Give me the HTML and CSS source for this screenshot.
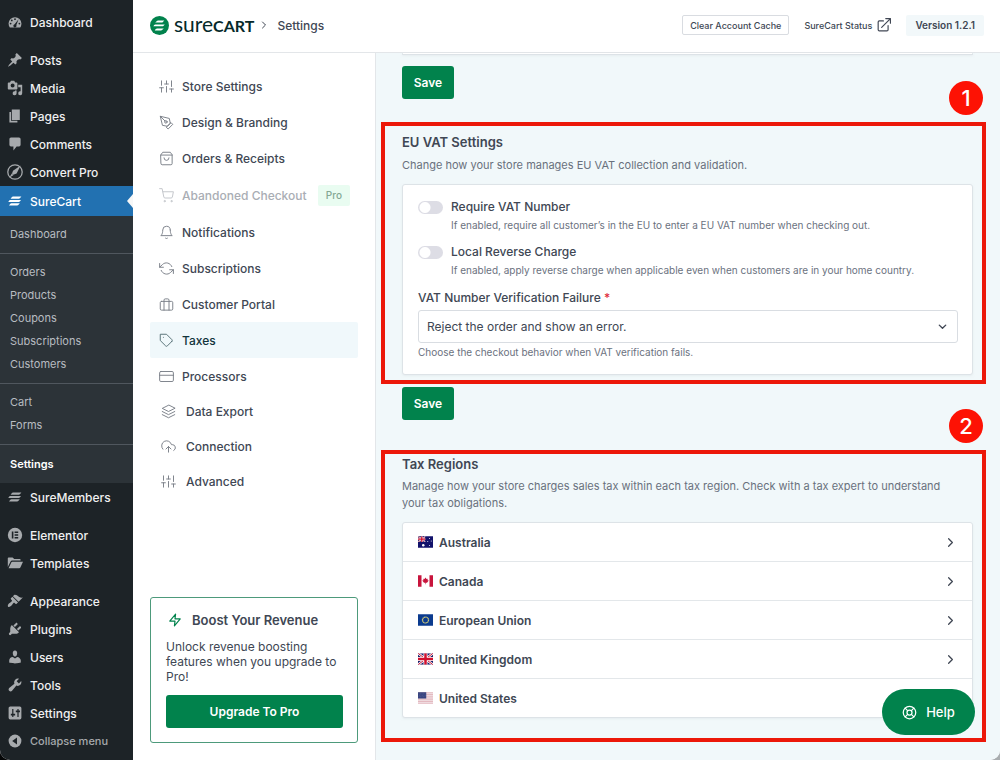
FILE: index.html
```html
<!DOCTYPE html>
<html lang="en">
<head>
<meta charset="utf-8">
<meta name="viewport" content="width=device-width, initial-scale=1">
<title>SureCart Settings</title>
<link rel="stylesheet" href="styles.css">
</head>
<body>
<svg class="sprite" aria-hidden="true">
  <symbol id="bars" viewBox="0 0 20 20"><path d="M7.500 4.500H18l-1.600 1.900c-.6.600-1 .8-1.800.8H4.500l1.400-1.900c.5-.6.900-.8 1.600-.8zM3.500 8.700h14l-1.200 1.700c-.5.700-.9 1-1.800 1H1.500l1.200-1.700c.3-.7.500-1 .8-1zM5.500 12.900H16l-1.600 1.900c-.6.600-1 .8-1.800.8H2.500l1.400-1.900c.5-.6.900-.8 1.600-.8z"/></symbol>
  <symbol id="sliders" viewBox="0 0 24 24"><path d="M4 21v-7M4 10V3M12 21v-9M12 8V3M20 21v-5M20 12V3M1 14h6M9 8h6M17 16h6"/></symbol>
  <symbol id="chevron" viewBox="0 0 24 24"><path d="M9 18l6-6-6-6"/></symbol>
  <symbol id="union" viewBox="0 0 30 24" preserveAspectRatio="none"><path fill="#1b1f6b" d="M0 0h30v24H0z"/><path stroke="#fff" stroke-width="5" d="M0 0l30 24M30 0L0 24"/><path stroke="#c8102e" stroke-width="2" d="M0 0l30 24M30 0L0 24"/><path stroke="#fff" stroke-width="8" d="M15 0v24M0 12h30"/><path stroke="#d0102e" stroke-width="5" d="M15 0v24M0 12h30"/></symbol>
</svg>
<div class="app">
  <aside class="admin">
    <nav aria-label="Admin menu">
      <ul class="menu">
        <li><a href="#"><svg class="dash" viewBox="0 0 20 20"><path d="M3.500 17h13c1-1.400 1.500-3 1.500-5a8 8 0 0 0-16 0c0 2 .5 3.600 1.500 5z"/><g fill="#1d2327"><circle cx="10" cy="6.500" r="1.100"/><circle cx="6" cy="8" r="1.100"/><circle cx="4.500" cy="12" r="1.100"/><circle cx="15.500" cy="12" r="1.100"/><path d="M14.500 6.500l-2.800 7.200a2 2 0 1 1-2.200-1z"/></g></svg>Dashboard</a></li>
      </ul>
      <ul class="menu">
        <li><a href="#"><svg class="dash" viewBox="0 0 20 20"><path d="M10.440 3.020l1.820-1.820 6.360 6.350-1.830 1.820c-1.050-.68-2.480-.57-3.410.36l-.75.75c-.92.93-1.040 2.350-.35 3.410l-1.830 1.820-2.410-2.410-2.800 2.790c-.42.42-3.380 2.710-3.800 2.290s1.860-3.390 2.280-3.810l2.790-2.790L4.100 9.360l1.830-1.820c1.050.69 2.480.57 3.400-.36l.75-.75c.93-.92 1.050-2.350.36-3.410z"/></svg>Posts</a></li>
        <li><a href="#"><svg class="dash" viewBox="0 0 20 20"><path fill-rule="evenodd" d="M13 11V4c0-.55-.45-1-1-1h-1.670L9 1H5L3.670 3H2c-.55 0-1 .45-1 1v7c0 .55.45 1 1 1h10c.55 0 1-.45 1-1zM7 4.500a2.500 2.500 0 1 1 0 5 2.500 2.500 0 0 1 0-5zM14 6h5v10.500a2.500 2.500 0 1 1-2-2.450V9h-3zM10 14.050V13h2v3.500a2.500 2.500 0 1 1-2-2.450z"/></svg>Media</a></li>
        <li><a href="#"><svg class="dash" viewBox="0 0 20 20"><path d="M6 15V2h10v13zm-1 1h8v2H3V5h2z"/></svg>Pages</a></li>
        <li><a href="#"><svg class="dash" viewBox="0 0 20 20"><path d="M5 2h10c1.100 0 2 .9 2 2v7c0 1.100-.9 2-2 2h-3l-4 5v-5H5c-1.100 0-2-.9-2-2V4c0-1.100.9-2 2-2z"/></svg>Comments</a></li>
        <li><a href="#"><svg class="dash" viewBox="0 0 20 20"><circle cx="10" cy="10" r="9" fill="none" stroke="#a7aaad" stroke-width="1.600"/><path d="M17 2L7.500 8.500l-1.200 3.300 1.500 1.500L12 12zM6 12l-3 5 5-3z"/></svg>Convert Pro</a></li>
        <li><a class="current" href="#"><svg class="dash"><use href="#bars"/></svg>SureCart</a></li>
      </ul>
      <div class="submenu">
        <ul><li><a href="#">Dashboard</a></li></ul>
        <ul><li><a href="#">Orders</a></li><li><a href="#">Products</a></li><li><a href="#">Coupons</a></li><li><a href="#">Subscriptions</a></li><li><a href="#">Customers</a></li></ul>
        <ul><li><a href="#">Cart</a></li><li><a href="#">Forms</a></li></ul>
        <ul><li><a class="chosen" href="#">Settings</a></li></ul>
      </div>
      <ul class="menu">
        <li><a href="#"><svg class="dash"><use href="#bars"/></svg>SureMembers</a></li>
      </ul>
      <ul class="menu">
        <li><a href="#"><svg class="dash" viewBox="0 0 20 20"><circle cx="10" cy="10" r="9"/><path fill="#1d2327" d="M6 5.500h2v9H6zM9.500 5.500H14v2H9.500zM9.500 9H14v2H9.500zM9.500 12.500H14v2H9.500z"/></svg>Elementor</a></li>
        <li><a href="#"><svg class="dash" viewBox="0 0 20 20"><path d="M1 15V4c0-.6.400-1 1-1h5l2 2h7c.6 0 1 .4 1 1v1H6.500c-1 0-1.600.4-2 1.200zM2 16.500l3.500-7.300c.3-.5.600-.7 1.200-.7H20l-3.300 7c-.4.700-.8 1-1.500 1z"/></svg>Templates</a></li>
      </ul>
      <ul class="menu">
        <li><a href="#"><svg class="dash" viewBox="0 0 20 20"><path d="M14.480 11.060L7.410 3.990l1.500-1.500c.5-.56 2.300-.47 3.510.32 1.210.8 1.430 1.280 2.910 2.100 1.180.64 2.450 1.260 4.450.85zm-.71.71L6.700 4.700 4.930 6.470c-.39.39-.39 1.020 0 1.410l1.060 1.060c.39.39.39 1.030 0 1.420-.6.6-1.430 1.110-2.210 1.690-.35.26-.7.53-1.010.84C1.430 14.230.400 16.080 1.400 17.070c.99 1 2.840-.03 4.180-1.360.31-.31.58-.66.85-1.020.57-.78 1.080-1.610 1.690-2.210.39-.39 1.020-.39 1.410 0l1.060 1.060c.39.39 1.020.39 1.410 0z"/></svg>Appearance</a></li>
        <li><a href="#"><svg class="dash" viewBox="0 0 20 20"><path d="M13.110 4.360L9.870 7.600 8 5.730l3.240-3.240c.35-.34 1.050-.2 1.560.32.52.51.66 1.210.31 1.550zm-8 1.770l.91-1.120 9.010 9.010-1.190.84c-.71.71-2.630 1.160-3.820 1.160H6.140L4.900 17.260c-.59.59-1.540.59-2.120 0-.59-.58-.59-1.530 0-2.120l1.240-1.240v-3.880c0-1.130.4-3.190 1.090-3.890zm7.260 3.970l3.240-3.240c.34-.35 1.040-.21 1.550.31.52.51.66 1.210.31 1.550l-3.240 3.250z"/></svg>Plugins</a></li>
        <li><a href="#"><svg class="dash" viewBox="0 0 20 20"><path d="M10 9.250c-2.270 0-2.730-3.440-2.730-3.440C7 4.020 7.820 2 9.970 2c2.160 0 2.980 2.020 2.710 3.810 0 0-.41 3.440-2.680 3.440zm0 2.570L12.720 10c2.390 0 4.520 2.330 4.520 4.530v2.490s-3.650 1.130-7.240 1.130c-3.650 0-7.240-1.130-7.240-1.130v-2.490c0-2.250 1.940-4.480 4.470-4.480z"/></svg>Users</a></li>
        <li><a href="#"><svg class="dash" viewBox="0 0 20 20"><path d="M16.680 9.770c-1.340 1.340-3.300 1.670-4.950.99l-5.410 6.520c-.99.99-2.590.99-3.580 0s-.99-2.590 0-3.570l6.520-5.420c-.68-1.650-.35-3.610.99-4.950 1.280-1.280 3.120-1.620 4.720-1.060l-2.890 2.890 2.820 2.820 2.860-2.870c.53 1.580.18 3.390-1.080 4.650z"/></svg>Tools</a></li>
        <li><a href="#"><svg class="dash" viewBox="0 0 20 20"><path fill-rule="evenodd" d="M18 16V4c0-1.100-.9-2-2-2H4c-1.100 0-2 .9-2 2v12c0 1.100.9 2 2 2h12c1.100 0 2-.9 2-2zM8 11h2.200v2H8v2H6.500v-2H4.800v-2h1.700V5H8zm5-2h-2V7h2V5h1.500v2h1.700v2h-1.700v6H13z"/></svg>Settings</a></li>
        <li><button class="collapse" type="button"><svg class="dash" viewBox="0 0 20 20"><circle cx="10" cy="10" r="8"/><path fill="#1d2327" d="M12.500 5.500v9L6.500 10z"/></svg>Collapse menu</button></li>
      </ul>
    </nav>
  </aside>

  <div class="page">
    <header class="topbar">
      <a class="brand" href="#"><svg class="brand-mark" viewBox="0 0 20 20"><circle cx="10" cy="10" r="10" fill="#01824c"/><path fill="#fff" d="M8.500 4.800H15l-1.400 1.500c-.4.400-.8.600-1.400.6H5.500l1.500-1.500c.4-.4.900-.6 1.500-.6zM5.500 9h10l-1.200 1.300c-.4.400-.8.600-1.400.6H3.500l.9-1.300c.3-.4.600-.6 1.100-.6zM7.500 13.100h7L13 14.600c-.4.400-.9.600-1.500.6H5l1-1.400c.4-.5.800-.7 1.500-.7z"/></svg><span class="brand-name"><span class="brand-light">sure</span><b>CART</b></span></a>
      <svg class="line crumb"><use href="#chevron"/></svg>
      <span class="here">Settings</span>
      <div class="tools">
        <button class="cache" type="button">Clear Account Cache</button>
        <a class="status" href="#">SureCart Status <svg class="line ext" viewBox="0 0 24 24"><path d="M19 13v7a2 2 0 0 1-2 2H4a2 2 0 0 1-2-2V7a2 2 0 0 1 2-2h7M15 1h8v8M8 16L23 1"/></svg></a>
        <span class="version">Version 1.2.1</span>
      </div>
    </header>

    <div class="columns">
      <div class="side">
        <nav aria-label="Settings sections">
          <ul class="tabs">
            <li><a href="#"><svg class="line"><use href="#sliders"/></svg>Store Settings</a></li>
            <li><a href="#"><svg class="line" viewBox="0 0 24 24"><path d="M12 19l7-7 3 3-7 7zM18 13l-1.500-7.500L2 2l3.500 14.500L13 18zM2 2l7.600 7.600"/><circle cx="11" cy="11" r="2"/></svg>Design &amp; Branding</a></li>
            <li><a href="#"><svg class="line" viewBox="0 0 24 24"><path d="M3 6l3-4h12l3 4v14a2 2 0 0 1-2 2H5a2 2 0 0 1-2-2zM3 6.500h18M8 11a4 4 0 0 0 8 0"/></svg>Orders &amp; Receipts</a></li>
            <li class="locked"><a href="#"><svg class="line" viewBox="0 0 24 24"><circle cx="9" cy="21" r="1"/><circle cx="20" cy="21" r="1"/><path d="M1 1h4l2.700 13.400a2 2 0 0 0 2 1.600h9.700a2 2 0 0 0 2-1.600L23 6H6"/></svg>Abandoned Checkout<span class="pro">Pro</span></a></li>
            <li><a href="#"><svg class="line" viewBox="0 0 24 24"><path d="M18 8A6 6 0 0 0 6 8c0 7-3 9-3 9h18s-3-2-3-9M13.700 21a2 2 0 0 1-3.400 0"/></svg>Notifications</a></li>
            <li><a href="#"><svg class="line" viewBox="0 0 24 24"><path d="M1 4v6h6M23 20v-6h-6"/><path d="M20.500 9A9 9 0 0 0 5.600 5.600L1 10m22 4l-4.600 4.400A9 9 0 0 1 3.500 15"/></svg>Subscriptions</a></li>
            <li><a href="#"><svg class="line" viewBox="0 0 24 24"><rect x="2" y="7" width="20" height="14" rx="2"/><path d="M16 21V5a2 2 0 0 0-2-2h-4a2 2 0 0 0-2 2v16"/></svg>Customer Portal</a></li>
            <li><a class="active" href="#" aria-current="page"><svg class="line" viewBox="0 0 24 24"><path d="M20.600 13.400l-7.200 7.200a2 2 0 0 1-2.800 0L2 12V2h10l8.600 8.600a2 2 0 0 1 0 2.800zM7 7h.01"/></svg>Taxes</a></li>
            <li><a href="#"><svg class="line" viewBox="0 0 24 24"><rect x="1" y="4" width="22" height="16" rx="2"/><path d="M1 10h22"/></svg>Processors</a></li>
          </ul>
          <ul class="tabs extra">
            <li><a href="#"><svg class="line" viewBox="0 0 24 24"><path d="M12 2L2 7l10 5 10-5zM2 17l10 5 10-5M2 12l10 5 10-5"/></svg>Data Export</a></li>
            <li><a href="#"><svg class="line" viewBox="0 0 24 24"><path d="M16 16l-4-4-4 4M12 12v9M20.400 18.400A5 5 0 0 0 18 9h-1.300A8 8 0 1 0 3 16.300"/></svg>Connection</a></li>
            <li><a href="#"><svg class="line"><use href="#sliders"/></svg>Advanced</a></li>
          </ul>
        </nav>
        <section class="boost">
          <h2><svg class="line" viewBox="0 0 24 24"><path d="M13 2L3 14h9l-1 8 10-12h-9z"/></svg>Boost Your Revenue</h2>
          <p>Unlock revenue boosting features when you upgrade to Pro!</p>
          <button class="primary" type="button">Upgrade To Pro</button>
        </section>
      </div>

      <main class="content">
        <div class="card tail"></div>
        <button class="primary save" type="button">Save</button>

        <section class="marked">
          <span class="pin">1</span>
          <h2>EU VAT Settings</h2>
          <p class="intro">Change how your store manages EU VAT collection and validation.</p>
          <div class="card form">
            <div class="switch">
              <input type="checkbox" id="require" aria-describedby="require-help">
              <label for="require">Require VAT Number</label>
              <p class="help" id="require-help">If enabled, require all customer’s in the EU to enter a EU VAT number when checking out.</p>
            </div>
            <div class="switch">
              <input type="checkbox" id="reverse" aria-describedby="reverse-help">
              <label for="reverse">Local Reverse Charge</label>
              <p class="help" id="reverse-help">If enabled, apply reverse charge when applicable even when customers are in your home country.</p>
            </div>
            <div class="field">
              <label for="failure">VAT Number Verification Failure <span class="required">*</span></label>
              <div class="select">
                <select id="failure"><option>Reject the order and show an error.</option></select>
                <svg class="line" viewBox="0 0 24 24"><path d="M5 9l7 7 7-7"/></svg>
              </div>
              <p class="help">Choose the checkout behavior when VAT verification fails.</p>
            </div>
          </div>
        </section>
        <button class="primary save second" type="button">Save</button>

        <section class="marked regions">
          <span class="pin">2</span>
          <h2>Tax Regions</h2>
          <p class="intro">Manage how your store charges sales tax within each tax region. Check with a tax expert to understand your tax obligations.</p>
          <ul class="card list">
            <li><a href="#"><svg class="flag" viewBox="0 0 60 46"><path fill="#12126b" d="M0 0h60v46H0z"/><use href="#union" width="30" height="23"/><g fill="#fff"><circle cx="21" cy="36" r="5"/><circle cx="46" cy="9" r="2"/><circle cx="53" cy="19" r="2"/><circle cx="39" cy="21" r="2"/><circle cx="46" cy="37" r="2"/></g></svg>Australia<svg class="line go"><use href="#chevron"/></svg></a></li>
            <li><a href="#"><svg class="flag" viewBox="0 0 60 46"><path fill="#fff" d="M0 0h60v46H0z"/><path fill="#c8143c" d="M0 0h14v46H0zM46 0h14v46H46zM30 9l4 6 5-1-1 6 5 1-7 9h-5v6h-2v-6h-5l-7-9 5-1-1-6 5 1z"/></svg>Canada<svg class="line go"><use href="#chevron"/></svg></a></li>
            <li><a href="#"><svg class="flag" viewBox="0 0 60 46"><path fill="#0b3b8f" d="M0 0h60v46H0z"/><circle cx="30" cy="23" r="12" fill="none" stroke="#c8c47a" stroke-width="5" stroke-dasharray="5 1"/></svg>European Union<svg class="line go"><use href="#chevron"/></svg></a></li>
            <li><a href="#"><svg class="flag" viewBox="0 0 60 46"><use href="#union" width="60" height="46"/></svg>United Kingdom<svg class="line go"><use href="#chevron"/></svg></a></li>
            <li><a href="#"><svg class="flag" viewBox="0 0 60 46"><path fill="#f3e6e9" d="M0 0h60v46H0z"/><path stroke="#dda9b2" stroke-width="3" d="M0 2h60M0 9h60M0 16h60M0 23h60M0 30h60M0 37h60M0 44h60"/><path fill="#36427e" d="M0 0h33v25H0z"/><path stroke="#8a92b8" stroke-width="2" stroke-dasharray="2 4" d="M3 6h28M5 12h26M3 18h28"/></svg>United States<svg class="line go"><use href="#chevron"/></svg></a></li>
          </ul>
        </section>
      </main>
    </div>
  </div>
</div>
<button class="helper" type="button"><svg class="line" viewBox="0 0 24 24"><circle cx="12" cy="12" r="10"/><circle cx="12" cy="12" r="4"/><path d="M5 5l4 4M15 15l4 4M15 9l4-4M5 19l4-4"/></svg>Help</button>
</body>
</html>
```

FILE: styles.css
```css
* {
  box-sizing: border-box;
}

html {
  background: linear-gradient(to right, #050607 50%, #a9adaf 50%);
}

body {
  margin: 0;
  font-family: Inter, "Liberation Sans", sans-serif;
  font-size: 12px;
  color: #404754;
}

ul {
  list-style: none;
  margin: 0;
  padding: 0;
}

h2,
p {
  margin: 0;
}

a {
  color: inherit;
  text-decoration: none;
}

button,
select {
  font: inherit;
  color: inherit;
  cursor: pointer;
}

.sprite {
  position: absolute;
  width: 0;
  height: 0;
}

.line {
  fill: none;
  stroke: currentColor;
  stroke-width: 2;
  stroke-linecap: round;
  stroke-linejoin: round;
  flex: none;
}

.app {
  display: flex;
  min-height: 100vh;
  border-radius: 0 0 10px 10px;
  overflow: hidden;
  background: #fff;
}

/* Admin sidebar */

.admin {
  flex: none;
  width: 133px;
  padding-top: 8px;
  background: #1d2327;
  color: #f0f0f1;
}

.menu + .menu {
  margin-top: 10px;
}

.menu a,
.collapse {
  display: flex;
  align-items: center;
  gap: 7px;
  width: 100%;
  height: 28px;
  padding: 0 7px;
  font-weight: 500;
}

.menu .current {
  position: relative;
  height: 30px;
  background: #2271b1;
  color: #fff;
}

.current::after {
  content: "";
  position: absolute;
  right: 0;
  top: 8px;
  border: 7px solid transparent;
  border-left: 0;
  border-right: 6px solid #f6f7f7;
}

.dash {
  flex: none;
  width: 16px;
  height: 16px;
  fill: #a7aaad;
}

.current .dash {
  fill: #fff;
}

.collapse {
  border: 0;
  background: none;
  color: #a7aaad;
  font-size: 11px;
}

.submenu {
  background: #2c3338;
  color: #b8bcc1;
  font-size: 11px;
  line-height: 23px;
}

.submenu ul {
  padding: 7px 10px;
}

.submenu ul + ul {
  border-top: 1px solid #50575e;
}

.submenu ul:last-child {
  padding-top: 8px;
}

.submenu a {
  display: block;
}

.submenu .chosen {
  color: #fff;
  font-weight: 600;
}

/* Top bar */

.page {
  flex: 1;
  min-width: 0;
  display: flex;
  flex-direction: column;
}

.topbar {
  display: flex;
  align-items: center;
  height: 53px;
  padding: 0 16px 2px 17px;
  border-bottom: 1px solid #e3e6e9;
}

.brand {
  display: flex;
  align-items: center;
  gap: 5px;
  color: #06292a;
}

.brand-mark {
  width: 19px;
  height: 19px;
}

.brand-name {
  font-family: Lato, sans-serif;
  font-size: 16px;
  line-height: 20px;
}

.brand-light {
  font-size: 21px;
}

.crumb {
  width: 12px;
  height: 12px;
  margin: 0 7px 0 4px;
}

.here {
  font-weight: 500;
}

.tools {
  display: flex;
  align-items: center;
  gap: 15px;
  margin-left: auto;
  font-size: 9px;
  font-weight: 500;
}

.cache {
  height: 20px;
  padding: 0 7px;
  background: #fff;
  border: 1px solid #d9dce1;
  border-radius: 2px;
}

.status {
  display: flex;
  align-items: center;
  gap: 5px;
}

.ext {
  width: 14px;
  height: 14px;
}

.version {
  padding: 0 9px;
  line-height: 21px;
  background: #f2f8fa;
  border-radius: 2px;
  font-size: 10px;
  font-weight: 600;
}

/* Settings navigation */

.columns {
  flex: 1;
  display: flex;
}

.side {
  flex: none;
  display: flex;
  flex-direction: column;
  justify-content: space-between;
  width: 243px;
  padding: 15px 17px 17px;
  border-right: 1px solid #e3e6e9;
}

.tabs a {
  display: flex;
  align-items: center;
  gap: 8px;
  height: 36px;
  padding: 0 9px;
  border-radius: 2px;
  font-weight: 500;
}

.tabs .line {
  width: 15px;
  height: 15px;
  stroke-width: 1.5;
  opacity: .7;
}

.tabs .locked a {
  height: 38px;
  padding-right: 8px;
  color: #a9adb4;
}

.tabs .active {
  background: #f0f8fb;
  color: #12343b;
}

.tabs.extra a {
  height: 35px;
  gap: 10px;
  padding-left: 11px;
}

.pro {
  margin-left: auto;
  padding: 0 8px;
  line-height: 21px;
  background: #e9fcf1;
  color: #84a894;
  font-size: 10px;
  border-radius: 2px;
}

.boost {
  padding: 14px 14px 14px 15px;
  border: 1px solid #4d9a7b;
  border-radius: 3px;
}

.boost h2 {
  display: flex;
  align-items: center;
  gap: 10px;
  padding-left: 2px;
  font-size: 13px;
  line-height: 16px;
  font-weight: 600;
}

.boost .line {
  width: 14px;
  height: 14px;
  color: #01824c;
}

.boost p {
  margin: 11px 0;
  line-height: 15px;
}

.primary {
  height: 33px;
  border: 0;
  border-radius: 3px;
  background: #01824c;
  color: #fff;
  font-weight: 600;
}

.boost .primary {
  width: 100%;
}

/* Settings content */

.content {
  flex: 1;
  min-width: 0;
  padding: 0 14px 18px 5px;
  background: #f1f8fa;
}

.card {
  background: #fff;
  border: 1px solid #dde3e7;
  border-radius: 3px;
  box-shadow: 0 1px 2px #dde3e780;
}

.tail {
  height: 2px;
  margin: 0 13px 11px 21px;
  border-width: 0 1px 1px;
}

.save {
  display: block;
  width: 52px;
  margin: 0 0 23px 21px;
}

.second {
  margin: 3px 0 30px 21px;
}

.marked {
  position: relative;
  padding: 6px 9px 5px 17px;
  border: 4px solid #ec1809;
}

.marked h2 {
  font-size: 13px;
  line-height: 20px;
  font-weight: 600;
}

.intro {
  margin: 5px 0 10px;
  padding-right: 15px;
  font-size: 11px;
  line-height: 17px;
  color: #69717d;
}

.regions {
  padding-top: 0;
  padding-bottom: 20px;
}

.regions .intro {
  margin-top: 4px;
}

.pin {
  position: absolute;
  right: -1px;
  top: -45px;
  width: 34px;
  height: 34px;
  border-radius: 50%;
  background: #fd1204;
  color: #fff;
  font-size: 22px;
  line-height: 34px;
  font-weight: 500;
  text-align: center;
}

.form {
  padding: 13px 14px 13px 15px;
}

.switch {
  display: grid;
  grid-template-columns: 25px 1fr;
  column-gap: 8px;
  align-items: center;
  margin-bottom: 9px;
}

.switch label,
.field label {
  line-height: 18px;
  font-weight: 500;
}

.switch input {
  appearance: none;
  width: 25px;
  height: 13px;
  margin: 0;
  border-radius: 7px;
  background: radial-gradient(circle at 7px 50%, #fff 5px, transparent 6px) #dddde5;
}

.switch input:checked {
  background: radial-gradient(circle at 18px 50%, #fff 5px, transparent 6px) #01824c;
}

.help {
  font-size: 10px;
  line-height: 18px;
  color: #6b7280;
}

.switch .help {
  grid-column: 2;
}

.field {
  padding-top: 1px;
}

.field label {
  display: block;
}

.required {
  color: #e02d3c;
}

.select {
  position: relative;
  margin-top: 3px;
}

.select select {
  appearance: none;
  display: block;
  width: 100%;
  height: 33px;
  padding: 0 30px 0 8px;
  border: 1px solid #d9dde2;
  border-radius: 3px;
  background: #fff;
}

.select .line {
  position: absolute;
  right: 10px;
  top: 11px;
  width: 11px;
  height: 11px;
  stroke-width: 3;
  pointer-events: none;
}

.list li + li {
  border-top: 1px solid #e3e7ea;
}

.list a {
  display: flex;
  align-items: center;
  height: 38px;
  padding: 0 14px 0 15px;
  font-weight: 600;
}

.flag {
  flex: none;
  width: 15px;
  height: 12px;
  margin-right: 6px;
}

.go {
  width: 15px;
  height: 15px;
  margin-left: auto;
}

.helper {
  position: fixed;
  right: 25px;
  bottom: 25px;
  display: flex;
  align-items: center;
  justify-content: center;
  gap: 9px;
  width: 93px;
  height: 46px;
  border: 0;
  border-radius: 23px;
  background: #01824c;
  color: #fff;
  font-size: 13px;
  font-weight: 500;
}

.helper .line {
  width: 15px;
  height: 15px;
}
```
